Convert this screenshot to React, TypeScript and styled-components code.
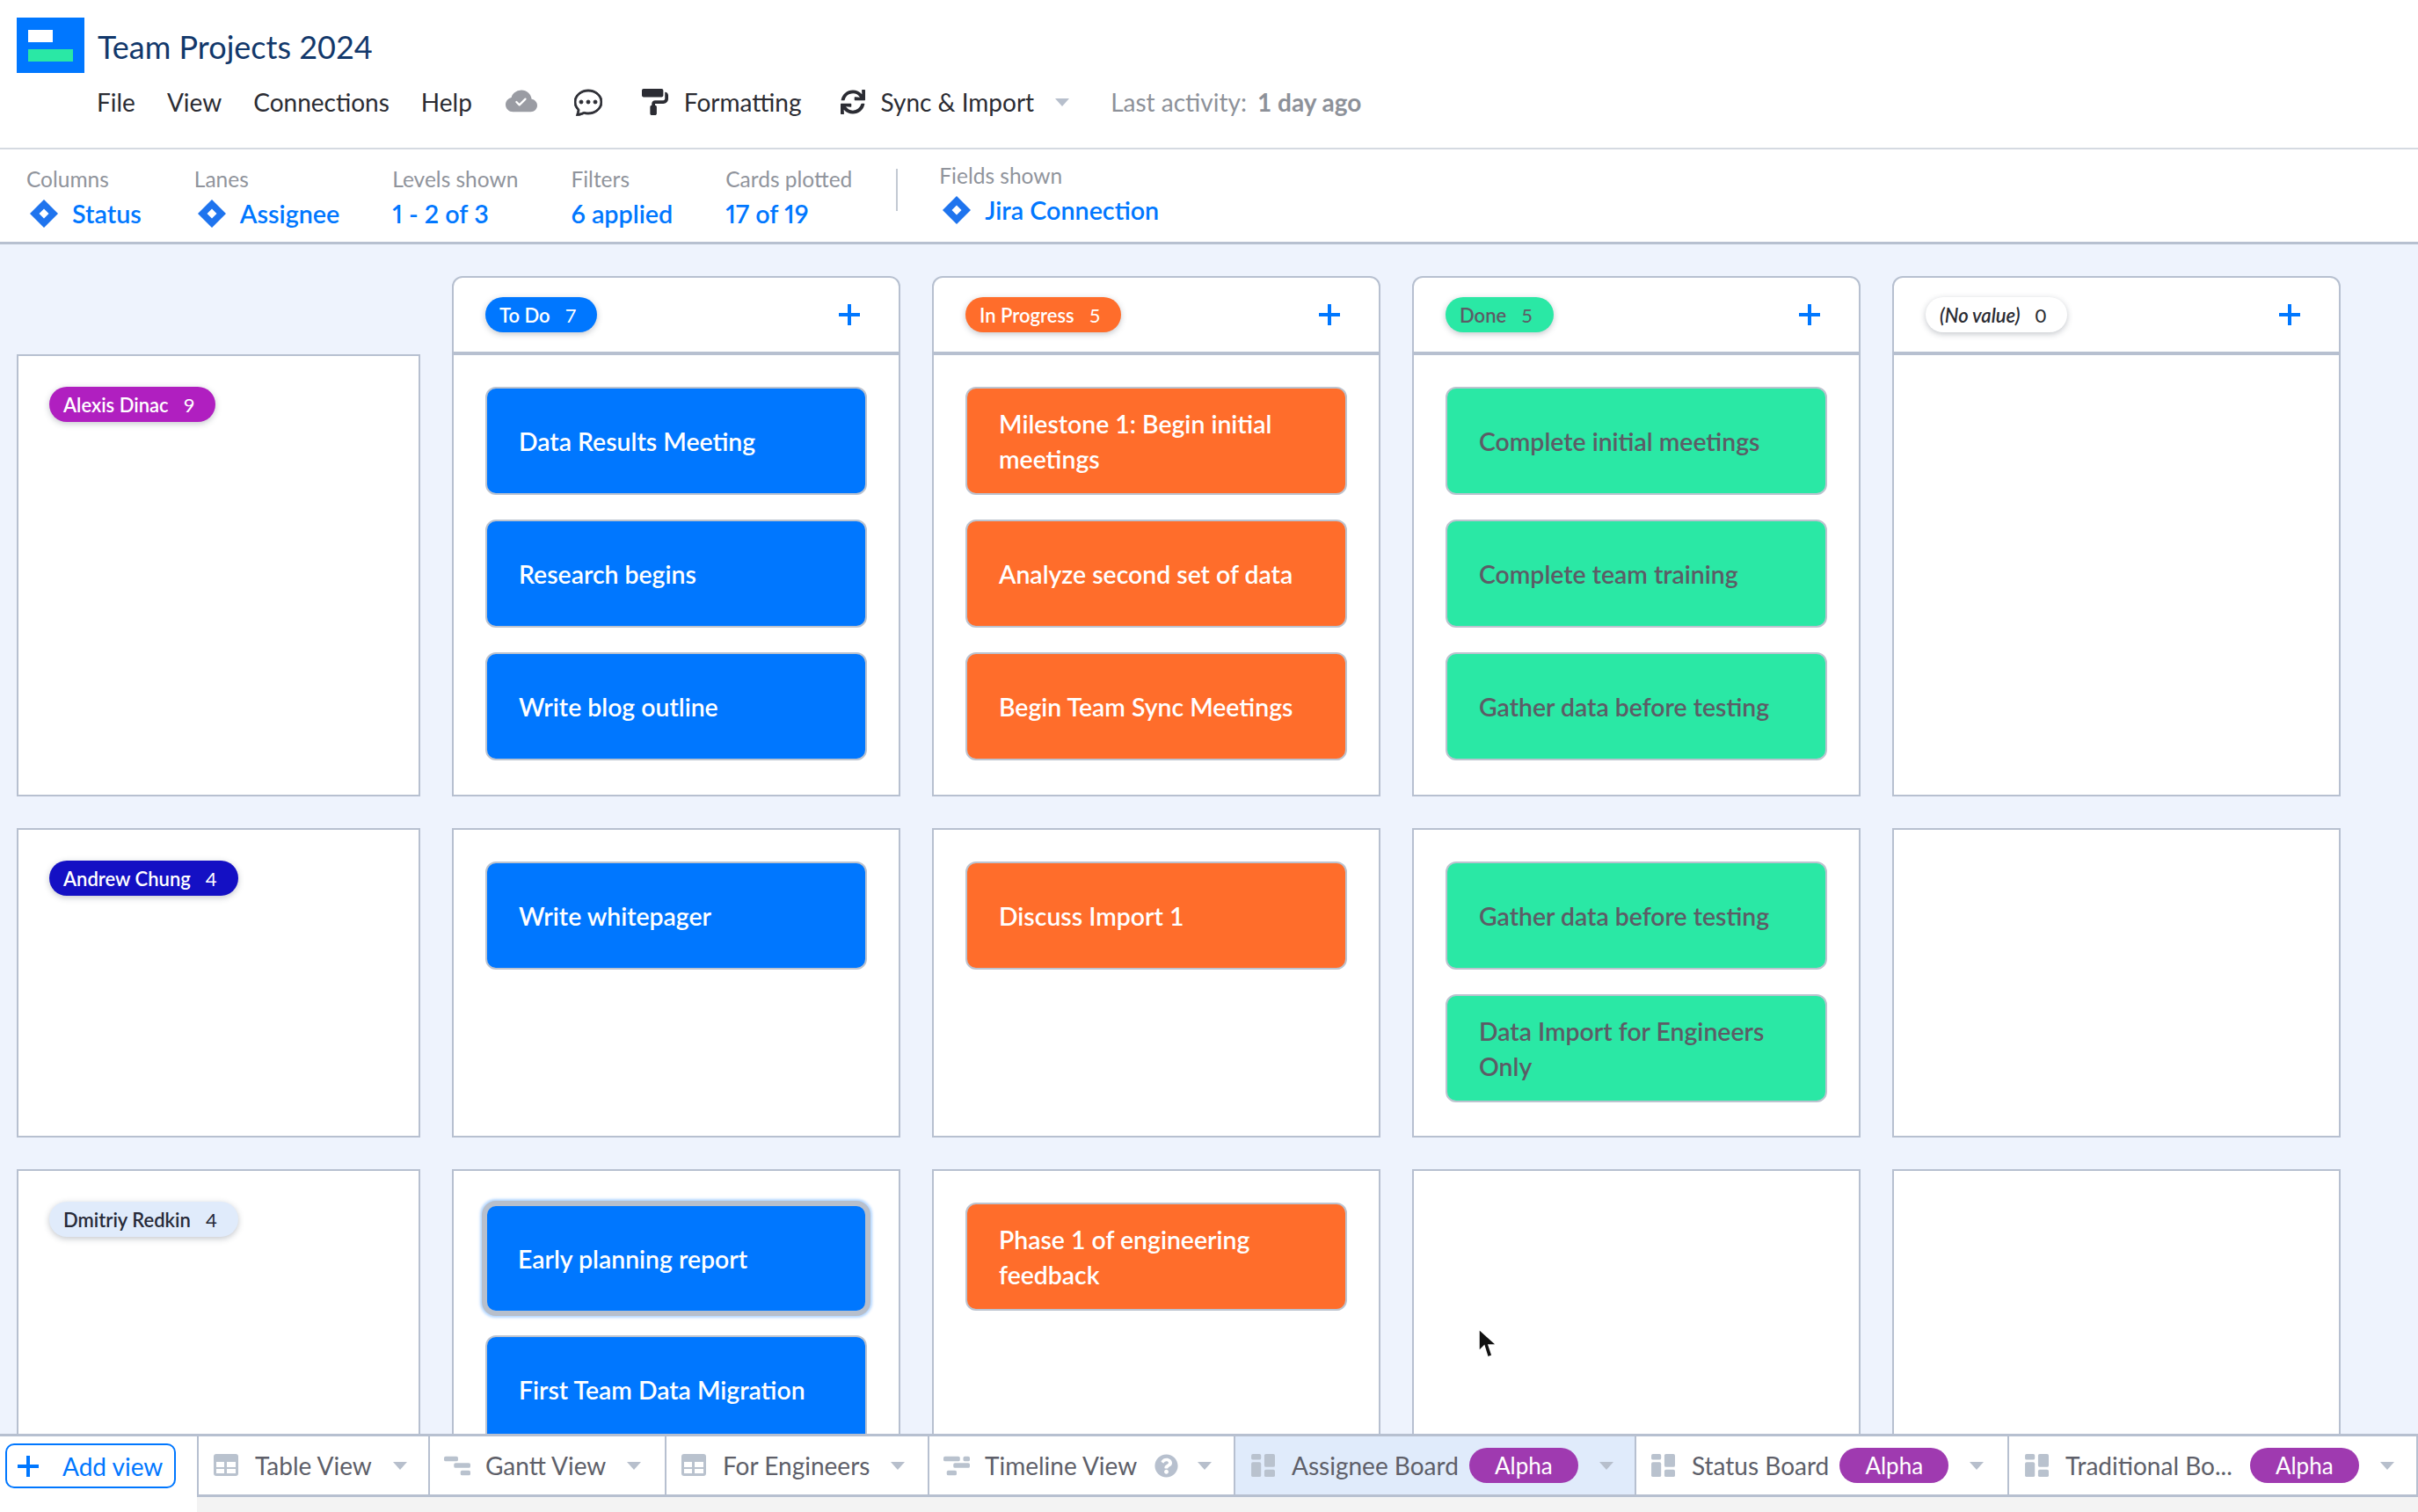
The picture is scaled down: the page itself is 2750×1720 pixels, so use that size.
import React from 'react';
import styled, { createGlobalStyle } from 'styled-components';
import { FaPaintRoller, FaSync, FaQuestionCircle } from 'react-icons/fa';
import { BsChatDots, BsCloudCheckFill } from 'react-icons/bs';

const BORDER = '#b7c0d0';
const BLUE = '#0077ff';

const GlobalStyle = createGlobalStyle`
  html, body { margin: 0; padding: 0; background: #fff; }
  body { font-family: Lato, "Open Sans", sans-serif; }
  * { box-sizing: border-box; }
`;

const Page = styled.div`
  width: 2750px;
  height: 1720px;
  display: flex;
  flex-direction: column;
  overflow: hidden;
  position: relative;
`;

const Header = styled.header`
  height: 170px;
  flex: none;
  border-bottom: 2px solid #d5dae1;
  padding: 20px 0 0 19px;
`;

const TitleRow = styled.div`
  display: flex;
  align-items: center;
  gap: 15px;
  height: 63px;
`;

const Title = styled.h1`
  margin: 3px 0 0;
  font-size: 36px;
  font-weight: 400;
  color: #12386b;
`;

const MenuRow = styled.nav`
  display: flex;
  align-items: center;
  height: 40px;
  margin: 13px 0 0 91px;
  font-size: 28px;
  color: #2b2c33;
`;

const MenuItem = styled.span<{ $gap?: number }>`
  margin-right: ${p => p.$gap ?? 36}px;
  display: flex;
  align-items: center;
  white-space: nowrap;
`;

const Activity = styled.span`
  margin-left: 47px;
  color: #8d9199;
  white-space: nowrap;
  b { font-weight: 700; margin-left: 12px; }
`;

const Caret = styled.span<{ $color?: string; $size?: number }>`
  display: inline-block;
  flex: none;
  width: 0;
  height: 0;
  border-left: ${p => p.$size ?? 8}px solid transparent;
  border-right: ${p => p.$size ?? 8}px solid transparent;
  border-top: ${p => (p.$size ?? 8) + 1}px solid ${p => p.$color ?? '#b7bfcc'};
`;

const Toolbar = styled.div`
  height: 108px;
  flex: none;
  display: flex;
  align-items: flex-start;
  gap: 60px;
  padding: 19px 0 0 30px;
  border-bottom: 3px solid ${BORDER};
`;

const Stat = styled.div<{ $up?: boolean }>`
  display: flex;
  flex-direction: column;
  gap: 8px;
  margin-top: ${p => (p.$up ? -4 : 0)}px;
`;

const StatLabel = styled.div`
  font-size: 24.5px;
  line-height: 30px;
  color: #90949c;
  white-space: nowrap;
`;

const StatValue = styled.div`
  display: flex;
  align-items: center;
  gap: 16px;
  font-size: 28.7px;
  line-height: 32px;
  font-weight: 600;
  font-variant-numeric: proportional-nums;
  color: ${BLUE};
  white-space: nowrap;
  svg { margin-left: 4px; }
`;

const ToolbarRule = styled.div`
  width: 2px;
  height: 48px;
  margin: 3px -13px 0 -10px;
  background: #c3c9d3;
`;

const Board = styled.main`
  flex: 1;
  min-height: 0;
  overflow: hidden;
  background: #eef3fd;
  padding: 36px 0 0 19px;
`;

const Row = styled.div`
  display: flex;
  gap: 36px;
`;

const Lane = styled(Row)<{ $height: number }>`
  height: ${p => p.$height}px;
  margin-bottom: 36px;
`;

const Corner = styled.div`
  width: 459px;
  flex: none;
`;

const ColumnHead = styled.div`
  width: 510px;
  height: 90px;
  flex: none;
  display: flex;
  align-items: center;
  justify-content: space-between;
  padding: 0 44px 0 36px;
  background: #fff;
  border: 2px solid ${BORDER};
  border-bottom: 4px solid ${BORDER};
  border-radius: 12px 12px 0 0;
`;

const Plus = styled.svg`
  width: 24px;
  height: 24px;
  flex: none;
  display: block;
`;

const LaneHead = styled.div<{ $first?: boolean }>`
  width: 459px;
  flex: none;
  background: #fff;
  border: 2px solid ${BORDER};
  margin-top: ${p => (p.$first ? -1 : 0)}px;
  padding: 35px;
`;

const Cell = styled.div<{ $first?: boolean }>`
  width: 510px;
  flex: none;
  background: #fff;
  border: 2px solid ${BORDER};
  border-top-width: ${p => (p.$first ? 0 : 2)}px;
  padding: 36px 36px 0;
  display: flex;
  flex-direction: column;
  gap: 28px;
`;

const Pill = styled.span<{ $bg: string; $fg?: string; $italic?: boolean }>`
  display: inline-flex;
  align-items: center;
  gap: 17px;
  height: 40px;
  padding: 0 24px 0 16px;
  border-radius: 20px;
  font-size: 22px;
  font-style: ${p => (p.$italic ? 'italic' : 'normal')};
  font-weight: 600;
  white-space: nowrap;
  background: ${p => p.$bg};
  color: ${p => p.$fg ?? '#fff'};
  box-shadow: 0 2px 7px rgba(40, 50, 70, 0.28);
  i { font-style: normal; font-weight: 400; }
`;

const Card = styled.div<{ $bg: string; $fg?: string; $selected?: boolean }>`
  height: 123px;
  flex: none;
  display: flex;
  align-items: center;
  padding: 0 ${p => (p.$selected ? 35 : 36)}px;
  background: ${p => p.$bg};
  color: ${p => p.$fg ?? '#fff'};
  border: 2px solid #bcc3cf;
  border-radius: 12px;
  font-size: 28.4px;
  font-weight: 600;
  line-height: 40px;
  ${p =>
    p.$selected &&
    `margin: 2px 0 -2px;
     border-color: #b7bfcc;
     box-shadow: 0 0 0 4px #b7bfcc, 0 0 3px 6px rgba(0, 119, 255, 0.3);`}
`;

const Footer = styled.footer`
  height: 89px;
  flex: none;
  display: flex;
  background: #f3f3f3;
`;

const AddCell = styled.div`
  width: 224px;
  flex: none;
  background: #fff;
  border-top: 3px solid ${BORDER};
  padding: 8px 0 0 6px;
`;

const AddButton = styled.button`
  width: 194px;
  height: 51px;
  display: flex;
  align-items: center;
  gap: 27px;
  padding: 0 0 0 12px;
  background: #fff;
  border: 2px solid ${BLUE};
  border-radius: 10px;
  color: ${BLUE};
  font-family: inherit;
  font-size: 28px;
`;

const Tabs = styled.div`
  flex: 1;
  height: 72px;
  display: flex;
  background: #fff;
  border-top: 3px solid ${BORDER};
  border-bottom: 3px solid ${BORDER};
  border-right: 2px solid ${BORDER};
`;

const Tab = styled.div<{ $active?: boolean; $width: number; $pad?: number }>`
  width: ${p => p.$width}px;
  flex: none;
  display: flex;
  align-items: center;
  padding-left: ${p => p.$pad ?? 17}px;
  border-left: 2px solid ${BORDER};
  background: ${p => (p.$active ? '#e0ebfb' : '#fff')};
  font-size: 28px;
  color: #5e5f69;
  white-space: nowrap;
`;

const TabCaret = styled(Caret)`
  margin-left: 24px;
`;

const TabIcon = styled.svg`
  flex: none;
  display: block;
  width: 30px;
  height: 26px;
  margin-right: 17px;
`;

const Alpha = styled.span<{ $gap?: number }>`
  flex: none;
  width: 124px;
  height: 40px;
  line-height: 40px;
  text-align: center;
  border-radius: 20px;
  background: #9f3ab0;
  color: #fff;
  font-size: 26px;
  margin-left: ${p => p.$gap ?? 12}px;
`;

const HelpIcon = styled(FaQuestionCircle)`
  flex: none;
  width: 27px;
  height: 27px;
  color: #b7c0ce;
  margin: 0 22px 0 20px;
`;

const BoldChat = styled(BsChatDots)`
  stroke: currentColor;
  stroke-width: 0.45px;
`;

const Pointer = styled.svg`
  position: absolute;
  left: 1680px;
  top: 1511px;
  width: 24px;
  height: 36px;
`;

const JiraDiamond = () => (
  <svg width="32" height="32" viewBox="0 0 32 32">
    <path fillRule="evenodd" fill="#1f74ee" d="M16 0 32 16 16 32 0 16ZM16 10.5 10.5 16 16 21.5 21.5 16Z" />
  </svg>
);

const PlusIcon = () => (
  <Plus viewBox="0 0 24 24">
    <path d="M12 0v24M0 12h24" stroke={BLUE} strokeWidth="4" />
  </Plus>
);

const TableIcon = () => (
  <TabIcon viewBox="0 0 30 26">
    <rect width="28" height="25" rx="3" fill="#b9c2ce" />
    <path d="M3 9h9v6H3zM15 9h10v6H15zM3 17h9v5H3zM15 17h10v5H15z" fill="#fff" />
  </TabIcon>
);

const GanttIcon = () => (
  <TabIcon viewBox="0 0 32 26">
    <rect x="0" y="2" width="17" height="6" rx="2" fill="#b9c2ce" />
    <rect x="12" y="10" width="20" height="6" rx="2" fill="#b9c2ce" />
    <rect x="20" y="19" width="12" height="6" rx="2" fill="#b9c2ce" />
  </TabIcon>
);

const TimelineIcon = () => (
  <TabIcon viewBox="0 0 32 26">
    <rect x="0" y="2" width="20" height="6" rx="2" fill="#b9c2ce" />
    <rect x="24" y="2" width="8" height="6" rx="2" fill="#b9c2ce" />
    <rect x="12" y="10" width="20" height="6" rx="2" fill="#b9c2ce" />
    <rect x="4" y="19" width="12" height="6" rx="2" fill="#b9c2ce" />
  </TabIcon>
);

const BoardIcon = () => (
  <TabIcon viewBox="0 0 30 28">
    <rect x="0" y="0" width="12" height="7" rx="2" fill="#b9c2ce" />
    <rect x="0" y="10" width="12" height="18" rx="2" fill="#b9c2ce" />
    <rect x="16" y="0" width="13" height="16" rx="2" fill="#b9c2ce" />
    <rect x="16" y="19" width="13" height="9" rx="2" fill="#b9c2ce" />
  </TabIcon>
);

type CardData = { text: string; selected?: boolean };

const COLUMNS = [
  { label: 'To Do', count: 7, bg: BLUE, fg: '#fff', cardFg: '#fff' },
  { label: 'In Progress', count: 5, bg: '#ff6d2b', fg: '#fff', cardFg: '#fff' },
  { label: 'Done', count: 5, bg: '#2ae8a5', fg: '#5c5c66', cardFg: '#5c5c66' },
];

const LANES: { name: string; count: number; bg: string; fg?: string; height: number; cells: CardData[][] }[] = [
  {
    name: 'Alexis Dinac',
    count: 9,
    bg: '#b01fc0',
    height: 502,
    cells: [
      [{ text: 'Data Results Meeting' }, { text: 'Research begins' }, { text: 'Write blog outline' }],
      [{ text: 'Milestone 1: Begin initial meetings' }, { text: 'Analyze second set of data' }, { text: 'Begin Team Sync Meetings' }],
      [{ text: 'Complete initial meetings' }, { text: 'Complete team training' }, { text: 'Gather data before testing' }],
      [],
    ],
  },
  {
    name: 'Andrew Chung',
    count: 4,
    bg: '#1410c4',
    height: 352,
    cells: [
      [{ text: 'Write whitepager' }],
      [{ text: 'Discuss Import 1' }],
      [{ text: 'Gather data before testing' }, { text: 'Data Import for Engineers Only' }],
      [],
    ],
  },
  {
    name: 'Dmitriy Redkin',
    count: 4,
    bg: '#e0ebfb',
    fg: '#272a38',
    height: 500,
    cells: [
      [{ text: 'Early planning report', selected: true }, { text: 'First Team Data Migration' }],
      [{ text: 'Phase 1 of engineering feedback' }],
      [],
      [],
    ],
  },
];

const App = () => (
  <Page>
    <GlobalStyle />
    <Header>
      <TitleRow>
        <svg width="77" height="63" viewBox="0 0 77 63">
          <rect width="77" height="63" fill={BLUE} />
          <rect x="13" y="14" width="28" height="14" fill="#fff" />
          <rect x="13" y="36" width="51" height="14" fill="#2ae8a5" />
        </svg>
        <Title>Team Projects 2024</Title>
      </TitleRow>
      <MenuRow>
        <MenuItem>File</MenuItem>
        <MenuItem>View</MenuItem>
        <MenuItem>Connections</MenuItem>
        <MenuItem $gap={38}>Help</MenuItem>
        <MenuItem $gap={42}><BsCloudCheckFill size={36} color="#9a9ca3" /></MenuItem>
        <MenuItem $gap={45}><BoldChat size={32} /></MenuItem>
        <MenuItem $gap={18}><FaPaintRoller size={30} /></MenuItem>
        <MenuItem $gap={44}>Formatting</MenuItem>
        <MenuItem $gap={18}><FaSync size={28} /></MenuItem>
        <MenuItem $gap={24}>Sync &amp; Import</MenuItem>
        <Caret />
        <Activity>Last activity:<b>1 day ago</b></Activity>
      </MenuRow>
    </Header>
    <Toolbar>
      <Stat>
        <StatLabel>Columns</StatLabel>
        <StatValue><JiraDiamond />Status</StatValue>
      </Stat>
      <Stat>
        <StatLabel>Lanes</StatLabel>
        <StatValue><JiraDiamond />Assignee</StatValue>
      </Stat>
      <Stat>
        <StatLabel>Levels shown</StatLabel>
        <StatValue>1 - 2 of 3</StatValue>
      </Stat>
      <Stat>
        <StatLabel>Filters</StatLabel>
        <StatValue>6 applied</StatValue>
      </Stat>
      <Stat>
        <StatLabel>Cards plotted</StatLabel>
        <StatValue>17 of 19</StatValue>
      </Stat>
      <ToolbarRule />
      <Stat $up>
        <StatLabel>Fields shown</StatLabel>
        <StatValue><JiraDiamond />Jira Connection</StatValue>
      </Stat>
    </Toolbar>
    <Board>
      <Row>
        <Corner />
        {COLUMNS.map(c => (
          <ColumnHead key={c.label}>
            <Pill $bg={c.bg} $fg={c.fg}>{c.label}<i>{c.count}</i></Pill>
            <PlusIcon />
          </ColumnHead>
        ))}
        <ColumnHead>
          <Pill $bg="#fff" $fg="#2b2c33" $italic>(No value)<i>0</i></Pill>
          <PlusIcon />
        </ColumnHead>
      </Row>
      {LANES.map((lane, i) => (
        <Lane key={lane.name} $height={lane.height}>
          <LaneHead $first={i === 0}>
            <Pill $bg={lane.bg} $fg={lane.fg}>{lane.name}<i>{lane.count}</i></Pill>
          </LaneHead>
          {lane.cells.map((cards, j) => (
            <Cell key={j} $first={i === 0}>
              {cards.map(card => (
                <Card
                  key={card.text}
                  $bg={COLUMNS[j].bg}
                  $fg={COLUMNS[j].cardFg}
                  $selected={card.selected}
                >
                  {card.text}
                </Card>
              ))}
            </Cell>
          ))}
        </Lane>
      ))}
    </Board>
    <Footer>
      <AddCell>
        <AddButton>
          <PlusIcon />
          Add view
        </AddButton>
      </AddCell>
      <Tabs>
        <Tab $width={263}><TableIcon />Table View<TabCaret /></Tab>
        <Tab $width={269} $pad={16}><GanttIcon />Gantt View<TabCaret /></Tab>
        <Tab $width={299}><TableIcon />For Engineers<TabCaret /></Tab>
        <Tab $width={348} $pad={16}>
          <TimelineIcon />Timeline View
          <HelpIcon />
          <Caret />
        </Tab>
        <Tab $width={456} $active><BoardIcon />Assignee Board<Alpha>Alpha</Alpha><TabCaret /></Tab>
        <Tab $width={424} $pad={16}><BoardIcon />Status Board<Alpha>Alpha</Alpha><TabCaret /></Tab>
        <Tab $width={465}><BoardIcon />Traditional Bo...<Alpha $gap={20}>Alpha</Alpha><TabCaret /></Tab>
      </Tabs>
    </Footer>
    <Pointer viewBox="0 0 24 36">
      <path d="M2 1 2 26 8 20 12 33 17 31 13 19 22 19Z" fill="#111" stroke="#fff" strokeWidth="1.5" />
    </Pointer>
  </Page>
);

export default App;
